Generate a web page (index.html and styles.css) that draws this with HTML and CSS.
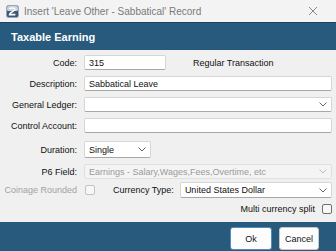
FILE: index.html
```html
<!DOCTYPE html>
<html lang="en">
<head>
    <meta charset="UTF-8">
    <title>Insert 'Leave Other - Sabbatical' Record</title>
    <link rel="stylesheet" href="styles.css">
</head>
<body>
    <div class="dialog">
        <div class="titlebar">
            <svg class="app-icon" width="13" height="13" viewBox="0 0 13 13">
                <rect x="0.5" y="0.5" width="12" height="12" rx="2" fill="#3b5878" stroke="#9aa7b6"/>
                <rect x="1" y="1" width="11" height="5" rx="1.5" fill="#c9d2dc"/>
                <path d="M3.5 4.2 C3.8 2.6 8.8 2.4 8.8 4.4 C8.8 6.2 4 6.6 3.6 9.6 L9.4 9.6" fill="none" stroke="#ffffff" stroke-width="1.6"/>
            </svg>
            <span class="title">Insert 'Leave Other - Sabbatical' Record</span>
            <svg class="close" width="10" height="10" viewBox="0 0 10 10">
                <path d="M1 1 L9 9 M9 1 L1 9" stroke="#8a8a8a" stroke-width="1"/>
            </svg>
        </div>

        <div class="header">Taxable Earning</div>

        <div class="form">
            <div class="row">
                <label>Code:</label>
                <div class="split">
                    <div class="field code">315</div>
                    <span class="note">Regular Transaction</span>
                </div>
            </div>
            <div class="row">
                <label>Description:</label>
                <div class="field">Sabbatical Leave</div>
            </div>
            <div class="row">
                <label>General Ledger:</label>
                <div class="field select">
                    <span></span>
                    <svg class="chevron" width="8" height="5" viewBox="0 0 8 5"><path d="M0.5 0.5 L4 4 L7.5 0.5" fill="none" stroke="#666" stroke-width="1"/></svg>
                </div>
            </div>
            <div class="row">
                <label>Control Account:</label>
                <div class="field"></div>
            </div>
            <div class="row row-duration">
                <label>Duration:</label>
                <div class="field select duration">
                    <span>Single</span>
                    <svg class="chevron" width="8" height="5" viewBox="0 0 8 5"><path d="M0.5 0.5 L4 4 L7.5 0.5" fill="none" stroke="#666" stroke-width="1"/></svg>
                </div>
            </div>
            <div class="row row-p6">
                <label>P6 Field:</label>
                <div class="field select disabled">
                    <span>Earnings - Salary,Wages,Fees,Overtime, etc</span>
                    <svg class="chevron" width="8" height="5" viewBox="0 0 8 5"><path d="M0.5 0.5 L4 4 L7.5 0.5" fill="none" stroke="#bbb" stroke-width="1"/></svg>
                </div>
            </div>
            <div class="row row-currency">
                <label class="muted">Coinage Rounded</label>
                <div class="currency">
                    <span class="checkbox disabled-box"></span>
                    <span class="currency-label">Currency Type:</span>
                    <div class="field select">
                        <span>United States Dollar</span>
                        <svg class="chevron" width="8" height="5" viewBox="0 0 8 5"><path d="M0.5 0.5 L4 4 L7.5 0.5" fill="none" stroke="#666" stroke-width="1"/></svg>
                    </div>
                </div>
            </div>
            <div class="multi">
                <span>Multi currency split</span>
                <span class="checkbox"></span>
            </div>
        </div>

        <div class="footer">
            <button class="btn ok">Ok</button>
            <button class="btn">Cancel</button>
        </div>
    </div>
</body>
</html>
```

FILE: styles.css
```css
* {
    box-sizing: border-box;
    font-family: 'Liberation Sans', Arial, sans-serif;
}

body {
    margin: 0;
    background-color: #f0f0f0;
}

.dialog {
    width: 336px;
    height: 251px;
    overflow: hidden;
}

.titlebar {
    height: 22px;
    background-color: #f3f3f3;
    display: flex;
    align-items: center;
    padding: 0 6px;
}

.app-icon {
    margin-right: 5px;
}

.title {
    flex: 1;
    font-size: 10px;
    color: #7a7a7a;
}

.close {
    margin-right: 12px;
}

.header {
    height: 28px;
    background-color: #275a7d;
    border-top: 1px solid #1b4262;
    color: white;
    font-weight: 700;
    font-size: 11px;
    padding-left: 11px;
    display: flex;
    align-items: center;
}

.form {
    height: 172px;
    padding: 5px 4px 0 0;
    background-color: #f0f0f0;
}

.row {
    display: grid;
    grid-template-columns: 77px 1fr;
    column-gap: 7px;
    align-items: center;
    height: 15px;
    margin-bottom: 6px;
}

label {
    text-align: right;
    font-size: 9px;
    color: #111;
    white-space: nowrap;
}

label.muted {
    color: #a2a2a2;
}

.field {
    height: 15px;
    background-color: white;
    border: 1px solid #d6d6d6;
    border-bottom-color: #a8a8a8;
    border-radius: 2px;
    font-size: 9px;
    color: #111;
    padding: 0 4px;
    display: flex;
    align-items: center;
}

.select {
    justify-content: space-between;
}

.chevron {
    flex-shrink: 0;
}

.split {
    display: flex;
    align-items: center;
}

.code {
    width: 82px;
}

.note {
    margin-left: 27px;
    font-size: 9px;
    color: #111;
}

.row-duration {
    margin-top: 8px;
    height: 17px;
}

.duration {
    width: 67px;
    height: 17px;
}

.row-p6 {
    margin-bottom: 3px;
}

.disabled {
    background-color: #f4f4f4;
    border-color: #e0e0e0;
    color: #9a9a9a;
}

.row-currency {
    height: 16px;
}

.currency {
    display: flex;
    align-items: center;
}

.currency .field {
    flex: 1;
    height: 16px;
}

.currency-label {
    font-size: 9px;
    color: #111;
    margin: 0 6px 0 18px;
}

.checkbox {
    width: 10px;
    height: 10px;
    border: 1px solid #6f6f6f;
    border-radius: 2px;
    background-color: #f7f7f7;
    display: inline-block;
}

.disabled-box {
    border-color: #c4c4c4;
    margin-left: 1px;
}

.multi {
    display: flex;
    justify-content: flex-end;
    align-items: center;
    gap: 7px;
    font-size: 9px;
    color: #111;
    margin-top: 2px;
}

.footer {
    height: 29px;
    background-color: #275a7d;
    display: flex;
    justify-content: flex-end;
    gap: 7px;
    padding: 5px 17px 0 0;
}

.btn {
    height: 23px;
    border: 1px solid #c8c8c8;
    border-radius: 3px;
    background-color: #fdfdfd;
    font-size: 9px;
    color: #111;
    width: 40px;
    padding: 0;
}

.btn.ok {
    width: 42px;
    border-color: #4f8ac0;
}
```
